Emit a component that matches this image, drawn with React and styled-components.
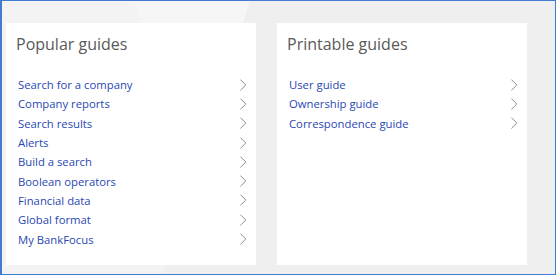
import React from "react";
import styled, { createGlobalStyle } from "styled-components";

const GlobalStyle = createGlobalStyle`
  html, body {
    margin: 0;
    padding: 0;
  }
  body {
    font-family: "Open Sans", "Liberation Sans", sans-serif;
  }
`;

const Frame = styled.div`
  box-sizing: border-box;
  width: 556px;
  height: 275px;
  border: 1px solid #3f7dd1;
  border-left-width: 2px;
  padding: 22px 0 9px 4px;
  display: grid;
  grid-template-columns: 250px 250px;
  column-gap: 21px;
  align-content: start;
  background:
    linear-gradient(108deg, transparent 0 236px, #efefef 236px),
    linear-gradient(72deg, #f3f3f3 0 210px, #f6f6f6 210px);
`;

const Panel = styled.section`
  background: #ffffff;
  height: 242px;
  padding: 10px 9px 0 12px;
  box-sizing: border-box;
`;

const Title = styled.h2`
  margin: 0 0 20px -2px;
  font-size: 16px;
  line-height: 22px;
  font-weight: 400;
  color: #595959;
`;

const List = styled.ul`
  list-style: none;
  margin: 0;
  padding: 0;
`;

const Item = styled.li`
  display: flex;
  align-items: center;
  justify-content: space-between;
  height: 19.3px;
`;

const Link = styled.a`
  font-size: 11.3px;
  color: #2947b3;
  text-decoration: none;
`;

const Chevron = () => (
  <svg width="8" height="12" viewBox="0 0 8 12" fill="none">
    <path d="M1.4 0.6 L6.8 6 L1.4 11.4" stroke="#8c8c8c" strokeWidth="1" />
  </svg>
);

const popular = [
  "Search for a company",
  "Company reports",
  "Search results",
  "Alerts",
  "Build a search",
  "Boolean operators",
  "Financial data",
  "Global format",
  "My BankFocus",
];

const printable = ["User guide", "Ownership guide", "Correspondence guide"];

const GuidePanel = ({ title, items }) => (
  <Panel>
    <Title>{title}</Title>
    <List>
      {items.map((label) => (
        <Item key={label}>
          <Link href="#">{label}</Link>
          <Chevron />
        </Item>
      ))}
    </List>
  </Panel>
);

export default function App() {
  return (
    <>
      <GlobalStyle />
      <Frame>
        <GuidePanel title="Popular guides" items={popular} />
        <GuidePanel title="Printable guides" items={printable} />
      </Frame>
    </>
  );
}
